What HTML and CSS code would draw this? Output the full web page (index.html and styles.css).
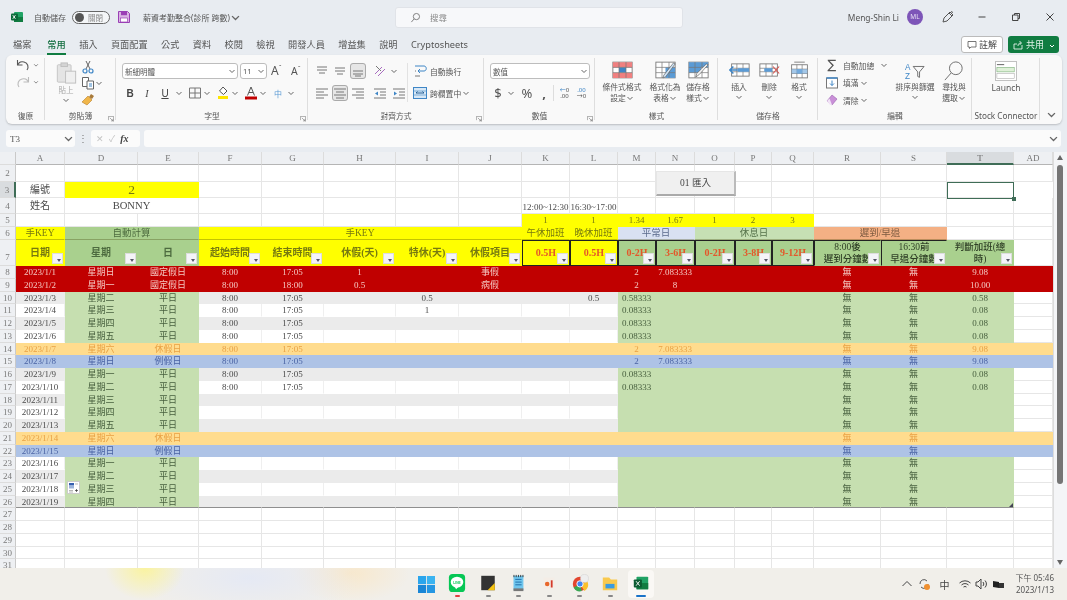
FILE: index.html
```html
<!DOCTYPE html>
<html lang="zh-Hant">
<head>
<meta charset="utf-8">
<title>Excel</title>
<link rel="stylesheet" href="styles.css">
</head>
<body>
<svg class="defs" width="0" height="0"><symbol id="cv" viewBox="0 0 8 8"><path d="M1.5 3L4 5.5 6.5 3" fill="none" stroke="#666" stroke-width="1"/></symbol><symbol id="dl" viewBox="0 0 8 8"><path d="M.5 .5h7v7M.5 .5v5M5.5 .5M2.5 2.5l4 4M6.5 4v2.5H4" fill="none" stroke="#777" stroke-width=".8"/></symbol></svg>
<div class="win">
<header class="title">
  <div class="tl">
    <svg class="xl" viewBox="0 0 12 12"><rect x="3" y="1" width="9" height="10" rx="1" fill="#21a366"/><rect x="3" y="6" width="9" height="5" fill="#107c41"/><rect y="2.5" width="7" height="7" rx="1" fill="#0b6a3a"/><path d="M1.8 4.2l2.6 3.6M4.4 4.2L1.8 7.8" stroke="#fff" stroke-width=".9"/></svg>
    <span class="as">自動儲存</span>
    <span class="tog"><i></i><em>關閉</em></span>
    <svg class="save" viewBox="0 0 12 12"><path d="M.5 .5h9l2 2v9H.5z" fill="#d9b3e3" stroke="#9a3fb5"/><rect x="3" y=".7" width="6" height="3.5" fill="#9a3fb5"/><rect x="2.5" y="7" width="7" height="4" fill="#fff" stroke="#9a3fb5" stroke-width=".7"/></svg>
    <span class="fn">薪資考勤整合(診所 跨數)</span>
    <svg class="cv big"><use href="#cv"/></svg>
  </div>
  <div class="search">
    <svg viewBox="0 0 12 12"><circle cx="7" cy="5" r="3.4" fill="none" stroke="#777"/><path d="M4.5 7.5L1.5 11" stroke="#777"/></svg>
    <span>搜尋</span>
  </div>
  <div class="tr">
    <span class="user">Meng-Shin Li</span>
    <span class="av">ML</span>
    <svg class="pen" viewBox="0 0 14 14"><path d="M2 12l1-4 6-6 3 3-6 6zM8 3l3 3M10 1.500l2 1" fill="none" stroke="#555"/></svg>
    <svg class="wb" viewBox="0 0 10 10"><path d="M1.500 5h7" stroke="#444"/></svg>
    <svg class="wb" viewBox="0 0 10 10"><path d="M1.500 3h5.500v5.500h-5.500zM3.500 3V1.500h5v5H7" fill="none" stroke="#444"/></svg>
    <svg class="wb" viewBox="0 0 10 10"><path d="M1.500 1.500l7 7M8.500 1.500l-7 7" stroke="#444"/></svg>
  </div>
</header>
<nav class="tabs">
  <span>檔案</span><span class="on">常用</span><span>插入</span><span>頁面配置</span><span>公式</span><span>資料</span><span>校閱</span><span>檢視</span><span>開發人員</span><span>增益集</span><span>說明</span><span>Cryptosheets</span>
  <div class="acts">
    <span class="cmt"><svg viewBox="0 0 10 10"><path d="M1 1.500h8v5.500H4L2.500 8.500V7H1z" fill="none" stroke="#555" stroke-width=".8"/></svg>註解</span>
    <span class="share"><svg viewBox="0 0 10 10"><path d="M1 4h3M1 4v5h8V5M5 6c0-2 1-3 3-3M6.500 1L8.500 3 6.500 5" fill="none" stroke="#fff" stroke-width=".8"/></svg>共用<svg class="cv w"><path d="M2 4l2 2 2-2" fill="none" stroke="#fff"/></svg></span>
  </div>
</nav>

<section class="ribbon">
  <div class="g g-undo">
    <div class="b col">
      <div class="row"><svg class="i16" viewBox="0 0 16 16"><path d="M12 13c2-3 1-7-3-8-2-.5-4 0-5 1L2.500 8M2.500 3v5h5" fill="none" stroke="#555" stroke-width="1.100"/></svg><svg class="cv"><use href="#cv"/></svg></div>
      <div class="row"><svg class="i16" viewBox="0 0 16 16"><path d="M4 13c-2-3-1-7 3-8 2-.5 4 0 5 1l1.500 2M13.500 3v5h-5" fill="none" stroke="#bbb" stroke-width="1.100"/></svg><svg class="cv"><use href="#cv"/></svg></div>
    </div>
    <div class="lb">復原</div>
  </div>
  <div class="g g-clip">
    <div class="b clip">
      <div class="paste">
        <svg viewBox="0 0 22 24"><rect x="1" y="3" width="15" height="19" rx="1" fill="#e4e4e4" stroke="#c4c4c4"/><rect x="5" y="1" width="7" height="4" fill="#d4d4d4" stroke="#bdbdbd"/><rect x="10" y="10" width="11" height="13" fill="#efefef" stroke="#bdbdbd"/></svg>
        <span>貼上</span>
        <svg class="cv"><use href="#cv"/></svg>
      </div>
      <div class="clipr">
        <svg class="i14" viewBox="0 0 14 14"><path d="M5 1l4 8M9 1L5 9" stroke="#666" fill="none"/><circle cx="4" cy="11" r="2" fill="none" stroke="#3f86c6" stroke-width="1.200"/><circle cx="10" cy="11" r="2" fill="none" stroke="#3f86c6" stroke-width="1.200"/></svg>
        <div class="row"><svg class="i14" viewBox="0 0 14 14"><path d="M1.500 1.500h6v9h-6z" fill="#fff" stroke="#666"/><path d="M6 5h6.500v8H6z" fill="#fff" stroke="#666"/><path d="M8 8h3M8 10h3" stroke="#3f86c6"/></svg><svg class="cv"><use href="#cv"/></svg></div>
        <svg class="i14" viewBox="0 0 14 14"><path d="M8 5l2-3 3 2-2 3z" fill="#a87a3a"/><path d="M1 10l6-6 4 4-5 5z" fill="#f0b64a" stroke="#b8802a" stroke-width=".6"/></svg>
      </div>
    </div>
    <div class="lb">剪貼簿<svg class="dl"><use href="#dl"/></svg></div>
  </div>
  <div class="g g-font">
    <div class="b col stack">
      <div class="row">
        <span class="sel w116">新細明體<svg class="cv"><use href="#cv"/></svg></span>
        <span class="sel w27 ml2">11<svg class="cv"><use href="#cv"/></svg></span>
        <span class="aa a1">A<sup>ˆ</sup></span><span class="aa a2">A<sup>ˇ</sup></span>
      </div>
      <div class="row r2">
        <span class="ib w16 bold">B</span><span class="ib w18 ital">I</span><span class="ib w18 und">U</span><svg class="cv"><use href="#cv"/></svg>
        <svg class="i14 m4" viewBox="0 0 14 14"><path d="M1.500 2h11v10h-11zM7 2v10M1.500 7h11" fill="none" stroke="#777"/></svg><svg class="cv"><use href="#cv"/></svg>
        <svg class="i14 m4" viewBox="0 0 14 14"><path d="M7 1l4 4-3.500 3.500L3.500 5z" fill="#fff" stroke="#555"/><rect x="2" y="10" width="10" height="3" fill="#ffe600"/></svg><svg class="cv"><use href="#cv"/></svg>
        <svg class="i14 m4" viewBox="0 0 14 14"><path d="M3.500 9.500L7 1l3.500 8.500M5 6.500h4" fill="none" stroke="#555"/><rect x="1" y="10.500" width="12" height="3" fill="#c00000"/></svg><svg class="cv"><use href="#cv"/></svg>
        <span class="ib w16 phon m3">中</span><svg class="cv"><use href="#cv"/></svg>
      </div>
    </div>
    <div class="lb">字型<svg class="dl"><use href="#dl"/></svg></div>
  </div>
  <div class="g g-align">
    <div class="b alignb">
      <div class="col stack lcol">
        <div class="row">
          <svg class="ib16" viewBox="0 0 16 16"><path d="M3 4h10M3 7h10M5 10h6" stroke="#777"/></svg>
          <svg class="ib16" viewBox="0 0 16 16"><path d="M3 6h10M3 9h10M5 12h6" stroke="#777" transform="translate(0 -1)"/></svg>
          <svg class="ib16 act" viewBox="0 0 16 16"><path d="M3 8h10M3 11h10M5 13h6" stroke="#777"/></svg>
          <svg class="ib16 m2" viewBox="0 0 16 16"><path d="M3 11l7-7M6 13l7-7" stroke="#a86cc0"/><path d="M4 3l5 5" stroke="#777"/></svg><svg class="cv"><use href="#cv"/></svg>
        </div>
        <div class="row r2">
          <svg class="ib16" viewBox="0 0 16 16"><path d="M2 4h12M2 7h8M2 10h12M2 13h8" stroke="#777"/></svg>
          <svg class="ib16 act" viewBox="0 0 16 16"><path d="M2 4h12M4 7h8M2 10h12M4 13h8" stroke="#777"/></svg>
          <svg class="ib16" viewBox="0 0 16 16"><path d="M2 4h12M6 7h8M2 10h12M6 13h8" stroke="#777"/></svg>
          <svg class="ib16 m2" viewBox="0 0 16 16"><path d="M2 4h12M8 7h6M8 10h6M2 13h12" stroke="#777"/><path d="M6 6.500L3 8.500l3 2z" fill="#3f86c6"/></svg>
          <svg class="ib16 m1" viewBox="0 0 16 16"><path d="M2 4h12M8 7h6M8 10h6M2 13h12" stroke="#777"/><path d="M3 6.500l3 2-3 2z" fill="#3f86c6"/></svg>
        </div>
      </div>
      <div class="col stack rcol">
        <div class="row"><svg class="ib16" viewBox="0 0 16 16"><path d="M3 3h9c3 0 3 5 0 5H6l2-2M6 8l2 2" fill="none" stroke="#3f86c6"/><path d="M3 8h1M3 13h5" stroke="#777"/></svg><span class="tx">自動換行</span></div>
        <div class="row r2"><svg class="ib16 mg" viewBox="0 0 16 16"><rect x="1.500" y="2.500" width="13" height="11" fill="#d8e8f6" stroke="#3f86c6"/><path d="M1.500 6h13M1.500 10h13" stroke="#3f86c6" stroke-width=".6"/><path d="M4 8h8M4 8l1.500-1.500M12 8l-1.500-1.500" stroke="#235f96" fill="none"/></svg><span class="tx">跨欄置中</span><svg class="cv mgv"><use href="#cv"/></svg></div>
      </div>
    </div>
    <div class="lb">對齊方式<svg class="dl"><use href="#dl"/></svg></div>
  </div>
  <div class="g g-num">
    <div class="b col stack">
      <div class="row"><span class="sel w100">數值<svg class="cv"><use href="#cv"/></svg></span></div>
      <div class="row r2 numr">
        <span class="ib w16 big">$</span><svg class="cv"><use href="#cv"/></svg>
        <span class="ib w18 big pc">%</span><span class="ib w16 big cm">,</span>
        <span class="sepv"></span>
        <span class="dec"><i>←</i>0<br>.00</span><span class="dec"><i>.00</i><br>→0</span>
      </div>
    </div>
    <div class="lb">數值<svg class="dl"><use href="#dl"/></svg></div>
  </div>
  <div class="g g-style">
    <div class="b bigs">
      <div class="bb w54"><svg viewBox="0 0 24 20"><rect x="1" y="1" width="22" height="18" fill="#fff" stroke="#777"/><path d="M1 1h22v6H1z M1 13h22v6H1z" fill="#f08080"/><rect x="8" y="7" width="8" height="6" fill="#3f86c6"/><path d="M1 7h22M1 13h22M8 1v18M16 1v18" stroke="#777" stroke-width=".8"/></svg><span>條件式格式<br>設定<svg class="cv"><use href="#cv"/></svg></span></div>
      <div class="bb w32"><svg viewBox="0 0 24 20"><rect x="1" y="1" width="22" height="18" fill="#fff" stroke="#777"/><path d="M12 7h11v12H12z" fill="#5b9bd5"/><path d="M1 7h22M1 13h22M8 1v18M16 1v18" stroke="#777" stroke-width=".8"/><path d="M23 3L12 18l-3 1 1-3L21 2z" fill="#cfe3f5" stroke="#555" stroke-width=".7"/></svg><span>格式化為<br>表格<svg class="cv"><use href="#cv"/></svg></span></div>
      <div class="bb w34"><svg viewBox="0 0 24 20"><rect x="1" y="1" width="22" height="18" fill="#fff" stroke="#777"/><path d="M1 1h22v6H1zM1 7h14v6H1z" fill="#5b9bd5"/><path d="M1 7h22M1 13h22M8 1v18M16 1v18" stroke="#777" stroke-width=".8"/><path d="M23 4L13 15l-4 3 1-4L21 3z" fill="#f3f3f3" stroke="#555" stroke-width=".7"/></svg><span>儲存格<br>樣式<svg class="cv"><use href="#cv"/></svg></span></div>
    </div>
    <div class="lb">樣式</div>
  </div>
  <div class="g g-cell">
    <div class="b bigs cells">
      <div class="bb w30"><svg viewBox="0 0 24 20"><rect x="3" y="3" width="20" height="14" fill="#fff" stroke="#777"/><path d="M3 8h20M3 12h20M9 3v14M16 3v14" stroke="#777" stroke-width=".8"/><rect x="10" y="8" width="13" height="4" fill="#5b9bd5"/><path d="M10 10H1M5 6l-4 4 4 4" fill="none" stroke="#3f86c6" stroke-width="1.800"/></svg><span>插入</span><svg class="cv"><use href="#cv"/></svg></div>
      <div class="bb w30"><svg viewBox="0 0 24 20"><rect x="1" y="3" width="20" height="14" fill="#fff" stroke="#777"/><path d="M1 8h20M1 12h20M8 3v14M15 3v14" stroke="#777" stroke-width=".8"/><rect x="6" y="8" width="9" height="4" fill="#5b9bd5"/><path d="M16 6l7 8M23 6l-7 8" stroke="#d9534f" stroke-width="1.300"/></svg><span>刪除</span><svg class="cv"><use href="#cv"/></svg></div>
      <div class="bb w30"><svg viewBox="0 0 24 20"><rect x="3" y="4" width="18" height="15" fill="#fff" stroke="#777"/><path d="M3 9h18M3 14h18M9 4v15M15 4v15" stroke="#777" stroke-width=".8"/><rect x="9" y="9" width="6" height="5" fill="#5b9bd5"/><rect x="3" y="9" width="18" height="5" fill="#7db1e0" opacity=".7"/><path d="M6 1h12" stroke="#777"/></svg><span>格式</span><svg class="cv"><use href="#cv"/></svg></div>
    </div>
    <div class="lb">儲存格</div>
  </div>
  <div class="g g-edit">
    <div class="b editb">
      <div class="col stack3">
        <div class="row"><span class="sum">∑</span><span class="tx">自動加總</span><svg class="cv sv"><use href="#cv"/></svg></div>
        <div class="row"><svg class="i12" viewBox="0 0 12 12"><rect x=".5" y="1" width="11" height="10" fill="#fff" stroke="#777"/><path d="M6 3.500v5M4 6.500l2 2 2-2" fill="none" stroke="#3f86c6"/><path d="M.5 1h11" stroke="#3f86c6" stroke-width="1.500"/></svg><span class="tx">填滿</span><svg class="cv"><use href="#cv"/></svg></div>
        <div class="row"><svg class="i12" viewBox="0 0 12 12"><path d="M1 7l5-6 5 4-5 6z" fill="#c990d8" stroke="#9a60b0" stroke-width=".6"/><path d="M1 7l3 4h2L3.500 4.500z" fill="#f1e3f6"/></svg><span class="tx">清除</span><svg class="cv"><use href="#cv"/></svg></div>
      </div>
      <div class="bb w40 sort"><svg viewBox="0 0 24 22"><text class="az" x="1" y="10">A</text><text class="az" x="1" y="20">Z</text><path d="M10 6h12l-5 6v6l-2-1v-5z" fill="none" stroke="#666"/></svg><span>排序與篩選</span><svg class="cv"><use href="#cv"/></svg></div>
      <div class="bb w36 find"><svg viewBox="0 0 24 22"><circle cx="14" cy="8" r="7" fill="none" stroke="#666" stroke-width="1"/><path d="M9 13l-7 8" stroke="#666"/></svg><span>尋找與<br>選取<svg class="cv"><use href="#cv"/></svg></span></div>
    </div>
    <div class="lb">編輯</div>
  </div>
  <div class="g g-stock">
    <div class="b bigs"><div class="bb stock"><svg viewBox="0 0 24 22"><rect x=".5" y=".5" width="23" height="21" fill="#fff" stroke="#bbb"/><rect x="2" y="7" width="19" height="5" fill="#dff0d8" stroke="#5a9a5a" stroke-width=".5"/><rect x="2" y="14" width="19" height="5" fill="#fff" stroke="#999" stroke-width=".5"/><path d="M2 4h8" stroke="#555"/></svg><span>Launch</span></div></div>
    <div class="lb lat">Stock Connector</div>
  </div>
  <div class="coll"><svg class="cv big"><use href="#cv"/></svg></div>
</section>

<div class="fbar">
  <div class="namebox"><span>T3</span><svg class="cv big"><use href="#cv"/></svg></div>
  <span class="dots">⋮</span>
  <div class="fx"><span class="x">✕</span><span class="x">✓</span><em>fx</em></div>
  <div class="finput"><svg class="cv big"><use href="#cv"/></svg></div>
</div>

<main class="sheet">
  <div class="grid">
    <div class="r hd"><b></b><span>A</span><span>D</span><span>E</span><span>F</span><span>G</span><span>H</span><span>I</span><span>J</span><span>K</span><span>L</span><span>M</span><span>N</span><span>O</span><span>P</span><span>Q</span><span>R</span><span>S</span><span class="cur">T</span><span>AD</span></div>
    <div class="r h17"><b>2</b><span></span><span></span><span></span><span></span><span></span><span></span><span></span><span></span><span></span><span></span><span></span><span></span><span></span><span></span><span></span><span></span><span></span><span></span><span></span></div>
    <div class="r h16"><b class="cur">3</b><span class="t10">編號</span><span class="s2 yl t-big">2</span><span></span><span></span><span></span><span></span><span></span><span></span><span></span><span></span><span></span><span></span><span></span><span></span><span></span><span></span><span></span></div>
    <div class="r h16"><b>4</b><span class="t10">姓名</span><span class="s2 t11">BONNY</span><span></span><span></span><span></span><span></span><span></span><span class="bt">12:00~12:30</span><span class="bt">16:30~17:00</span><span></span><span></span><span></span><span></span><span></span><span></span><span></span><span></span><span></span></div>
    <div class="r h13"><b>5</b><span></span><span></span><span></span><span></span><span></span><span></span><span></span><span></span><span class="yl">1</span><span class="yl">1</span><span class="yl">1.34</span><span class="yl">1.67</span><span class="yl">1</span><span class="yl">2</span><span class="yl">3</span><span></span><span></span><span></span><span></span></div>
    <div class="r h13 lab"><b>6</b><span class="yl">手KEY</span><span class="s2 gd">自動計算</span><span class="s5 yl">手KEY</span><span class="yl">午休加班</span><span class="yl">晚休加班</span><span class="s2 bl">平常日</span><span class="s3 lg">休息日</span><span class="s2 or">遲到/早退</span><span></span><span></span></div>
    <div class="r h26 th"><b>7</b>
      <span class="yl f">日期</span><span class="gd f">星期</span><span class="gd f">日</span><span class="yl f">起始時間</span><span class="yl f">結束時間</span><span class="yl f">休假(天)</span><span class="yl f">特休(天)</span><span class="yl f">休假項目</span>
      <span class="yl f bx hot">0.5H</span><span class="yl f bx hot">0.5H</span><span class="gd f bx hot">0-2H</span><span class="gd f bx hot">3-6H</span><span class="gd f bx hot">0-2H</span><span class="gd f bx hot">3-8H</span><span class="gd f bx hot">9-12H</span>
      <span class="gd f bt2">8:00後<br>遲到分鐘數</span><span class="gd f bt2">16:30前<br>早退分鐘數</span><span class="gd f bt3">判斷加班(總<br>時)</span><span></span></div>

    <div class="r red"><b>8</b><span>2023/1/1</span><span>星期日</span><span>國定假日</span><span>8:00</span><span>17:05</span><span>1</span><span></span><span>事假</span><span></span><span></span><span>2</span><span>7.083333</span><span></span><span></span><span></span><span>無</span><span>無</span><span>9.08</span><span></span></div>
    <div class="r red"><b>9</b><span>2023/1/2</span><span>星期一</span><span>國定假日</span><span>8:00</span><span>18:00</span><span>0.5</span><span></span><span>病假</span><span></span><span></span><span>2</span><span>8</span><span></span><span></span><span></span><span>無</span><span>無</span><span>10.00</span><span></span></div>
    <div class="r even"><b>10</b><span>2023/1/3</span><span>星期二</span><span>平日</span><span>8:00</span><span>17:05</span><span></span><span>0.5</span><span></span><span></span><span>0.5</span><span class="l">0.58333</span><span></span><span></span><span></span><span></span><span>無</span><span>無</span><span>0.58</span><span></span></div>
    <div class="r odd"><b>11</b><span>2023/1/4</span><span>星期三</span><span>平日</span><span>8:00</span><span>17:05</span><span></span><span>1</span><span></span><span></span><span></span><span class="l">0.08333</span><span></span><span></span><span></span><span></span><span>無</span><span>無</span><span>0.08</span><span></span></div>
    <div class="r even"><b>12</b><span>2023/1/5</span><span>星期四</span><span>平日</span><span>8:00</span><span>17:05</span><span></span><span></span><span></span><span></span><span></span><span class="l">0.08333</span><span></span><span></span><span></span><span></span><span>無</span><span>無</span><span>0.08</span><span></span></div>
    <div class="r odd"><b>13</b><span>2023/1/6</span><span>星期五</span><span>平日</span><span>8:00</span><span>17:05</span><span></span><span></span><span></span><span></span><span></span><span class="l">0.08333</span><span></span><span></span><span></span><span></span><span>無</span><span>無</span><span>0.08</span><span></span></div>
    <div class="r sat"><b>14</b><span>2023/1/7</span><span>星期六</span><span>休假日</span><span>8:00</span><span>17:05</span><span></span><span></span><span></span><span></span><span></span><span>2</span><span>7.083333</span><span></span><span></span><span></span><span>無</span><span>無</span><span>9.08</span><span></span></div>
    <div class="r sun"><b>15</b><span>2023/1/8</span><span>星期日</span><span>例假日</span><span>8:00</span><span>17:05</span><span></span><span></span><span></span><span></span><span></span><span>2</span><span>7.083333</span><span></span><span></span><span></span><span>無</span><span>無</span><span>9.08</span><span></span></div>
    <div class="r even"><b>16</b><span>2023/1/9</span><span>星期一</span><span>平日</span><span>8:00</span><span>17:05</span><span></span><span></span><span></span><span></span><span></span><span class="l">0.08333</span><span></span><span></span><span></span><span></span><span>無</span><span>無</span><span>0.08</span><span></span></div>
    <div class="r odd"><b>17</b><span>2023/1/10</span><span>星期二</span><span>平日</span><span>8:00</span><span>17:05</span><span></span><span></span><span></span><span></span><span></span><span class="l">0.08333</span><span></span><span></span><span></span><span></span><span>無</span><span>無</span><span>0.08</span><span></span></div>
    <div class="r even"><b>18</b><span>2023/1/11</span><span>星期三</span><span>平日</span><span></span><span></span><span></span><span></span><span></span><span></span><span></span><span></span><span></span><span></span><span></span><span></span><span>無</span><span>無</span><span></span><span></span></div>
    <div class="r odd"><b>19</b><span>2023/1/12</span><span>星期四</span><span>平日</span><span></span><span></span><span></span><span></span><span></span><span></span><span></span><span></span><span></span><span></span><span></span><span></span><span>無</span><span>無</span><span></span><span></span></div>
    <div class="r even"><b>20</b><span>2023/1/13</span><span>星期五</span><span>平日</span><span></span><span></span><span></span><span></span><span></span><span></span><span></span><span></span><span></span><span></span><span></span><span></span><span>無</span><span>無</span><span></span><span></span></div>
    <div class="r sat"><b>21</b><span>2023/1/14</span><span>星期六</span><span>休假日</span><span></span><span></span><span></span><span></span><span></span><span></span><span></span><span></span><span></span><span></span><span></span><span></span><span>無</span><span>無</span><span></span><span></span></div>
    <div class="r sun"><b>22</b><span>2023/1/15</span><span>星期日</span><span>例假日</span><span></span><span></span><span></span><span></span><span></span><span></span><span></span><span></span><span></span><span></span><span></span><span></span><span>無</span><span>無</span><span></span><span></span></div>
    <div class="r odd"><b>23</b><span>2023/1/16</span><span>星期一</span><span>平日</span><span></span><span></span><span></span><span></span><span></span><span></span><span></span><span></span><span></span><span></span><span></span><span></span><span>無</span><span>無</span><span></span><span></span></div>
    <div class="r even"><b>24</b><span>2023/1/17</span><span>星期二</span><span>平日</span><span></span><span></span><span></span><span></span><span></span><span></span><span></span><span></span><span></span><span></span><span></span><span></span><span>無</span><span>無</span><span></span><span></span></div>
    <div class="r odd"><b>25</b><span>2023/1/18</span><span>星期三</span><span>平日</span><span></span><span></span><span></span><span></span><span></span><span></span><span></span><span></span><span></span><span></span><span></span><span></span><span>無</span><span>無</span><span></span><span></span></div>
    <div class="r even last"><b>26</b><span>2023/1/19</span><span>星期四</span><span>平日</span><span></span><span></span><span></span><span></span><span></span><span></span><span></span><span></span><span></span><span></span><span></span><span></span><span>無</span><span>無</span><span></span><span></span></div>
    <div class="r"><b>27</b><span></span><span></span><span></span><span></span><span></span><span></span><span></span><span></span><span></span><span></span><span></span><span></span><span></span><span></span><span></span><span></span><span></span><span></span><span></span></div>
    <div class="r"><b>28</b><span></span><span></span><span></span><span></span><span></span><span></span><span></span><span></span><span></span><span></span><span></span><span></span><span></span><span></span><span></span><span></span><span></span><span></span><span></span></div>
    <div class="r"><b>29</b><span></span><span></span><span></span><span></span><span></span><span></span><span></span><span></span><span></span><span></span><span></span><span></span><span></span><span></span><span></span><span></span><span></span><span></span><span></span></div>
    <div class="r"><b>30</b><span></span><span></span><span></span><span></span><span></span><span></span><span></span><span></span><span></span><span></span><span></span><span></span><span></span><span></span><span></span><span></span><span></span><span></span><span></span></div>
    <div class="r"><b>31</b><span></span><span></span><span></span><span></span><span></span><span></span><span></span><span></span><span></span><span></span><span></span><span></span><span></span><span></span><span></span><span></span><span></span><span></span><span></span></div>
  </div>
  <div class="vs"><i class="up"></i><i class="thumb"></i><i class="down"></i></div>
  <div class="btn01">01 匯入</div>
  <div class="selbox"></div>
  <svg class="afill" viewBox="0 0 13 13"><rect x=".5" y=".5" width="12" height="12" fill="#fff" stroke="#ccc"/><rect x="2" y="2" width="5" height="2.500" fill="#3560b0"/><rect x="2" y="5" width="5" height="2.500" fill="#9db4dc"/><path d="M8 3h3M2 9.500h4M2 11h4" stroke="#999" stroke-width=".7"/><path d="M8 9.500h3M9.500 8v3" stroke="#333" stroke-width=".7"/></svg>
  <i class="handle"></i>
</main>

<footer class="taskbar">
  <div class="apps">
    <svg class="win11" viewBox="0 0 20 20"><rect width="9.500" height="9.500" fill="#2aa5ec"/><rect x="10.500" width="9.500" height="9.500" fill="#3ab3f0"/><rect y="10.500" width="9.500" height="9.500" fill="#1a86d6"/><rect x="10.500" y="10.500" width="9.500" height="9.500" fill="#2596e2"/></svg>
    <div class="app dotr"><svg viewBox="0 0 20 20"><rect width="18" height="20" x="1" rx="4" fill="#06c755"/><ellipse cx="10" cy="9" rx="7" ry="6" fill="#fff"/><path d="M7 13l2 4 3-3z" fill="#fff"/><text class="lt" x="10" y="11" text-anchor="middle">LINE</text></svg></div>
    <div class="app dot"><svg viewBox="0 0 20 20"><rect x="2.500" y="2" width="15" height="16" fill="#333"/><path d="M17.500 10v8h-8z" fill="#f6c413"/></svg></div>
    <div class="app dot"><svg viewBox="0 0 20 20"><rect x="5" y="2" width="11" height="16" fill="#6fc6ee"/><path d="M7 6h7M7 9h7M7 12h7" stroke="#1b6aa5"/><path d="M5.500 1v2.500M8 1v2.500M10.500 1v2.500M13 1v2.500M15.500 1v2.500" stroke="#333"/><rect x="5" y="16" width="11" height="3" fill="#777"/></svg></div>
    <div class="app dot"><svg viewBox="0 0 20 20"><rect x="4" y="4" width="12" height="13" fill="#f4ede6"/><circle cx="8" cy="11" r="2.500" fill="#e8672b"/><rect x="12" y="7" width="2" height="8" fill="#d43a2a"/></svg></div>
    <div class="app dot"><svg viewBox="0 0 20 20"><circle cx="10" cy="11" r="8" fill="#e2452f"/><path d="M10 11L3 15a8 8 0 0 0 9 4z" fill="#39a854"/><path d="M10 11l5 8a8 8 0 0 0 3-11z" fill="#fbc02d"/><circle cx="10" cy="11" r="3.500" fill="#4285f4" stroke="#fff"/><circle cx="15" cy="5" r="4.500" fill="#eee" stroke="#ccc" stroke-width=".5"/></svg></div>
    <div class="app dot"><svg viewBox="0 0 20 20"><path d="M2 4h7l2 2h7v12H2z" fill="#f9c94d"/><rect x="5" y="11" width="10" height="5" fill="#3a9be0"/></svg></div>
    <div class="app cur"><svg viewBox="0 0 20 20"><rect x="5" y="3" width="13" height="14" rx="1" fill="#21a366"/><rect x="5" y="10" width="13" height="7" fill="#107c41"/><rect x="2" y="6" width="9" height="9" rx="1" fill="#0b5c32"/><path d="M4.500 8l4 5M8.500 8l-4 5" stroke="#fff"/></svg></div>
  </div>
  <div class="tray">
    <svg class="ti" viewBox="0 0 14 14"><path d="M2.500 9L7 4.500 11.500 9" fill="none" stroke="#444"/></svg>
    <svg class="ti" viewBox="0 0 14 14"><path d="M3 7a4 4 0 0 1 7-3M11 7a4 4 0 0 1-7 3" fill="none" stroke="#555"/><circle cx="10" cy="10" r="3" fill="#f09030"/></svg>
    <span class="ime">中</span>
    <svg class="ti m" viewBox="0 0 14 14"><path d="M1.500 6a8 8 0 0 1 11 0M3.500 8a5 5 0 0 1 7 0M5.500 10a2.500 2.500 0 0 1 3 0" fill="none" stroke="#444"/></svg>
    <svg class="ti s" viewBox="0 0 14 14"><path d="M2 5h2l3-3v10L4 9H2z" fill="none" stroke="#444"/><path d="M9 5a3 3 0 0 1 0 4M11 3.500a5 5 0 0 1 0 7" fill="none" stroke="#444"/></svg>
    <svg class="ti s" viewBox="0 0 14 14"><path d="M2 4l6 1v6l-6-1z" fill="#222"/><rect x="8" y="6" width="5" height="5" fill="#333"/></svg>
    <div class="clock"><span>下午 05:46</span><span>2023/1/13</span></div>
  </div>
</footer>
</div>
</body>
</html>
```

FILE: styles.css
```css
* { box-sizing: border-box; }
html, body { margin: 0; height: 100%; overflow: hidden; }
body { font-family: "Noto Sans", "Noto Sans CJK TC", sans-serif; color: #555; font-size: 8px; }
.defs { position: absolute; }
.win { width: 1067px; height: 600px; background: #e8ecf1; display: flex; flex-direction: column; overflow: hidden; filter: blur(.35px); }
svg { display: block; flex: none; }
.cv { width: 8px; height: 8px; }
.cv.big { width: 11px; height: 11px; }
.row { display: flex; align-items: center; }

/* title bar */
.title { height: 34px; flex: none; display: grid; grid-template-columns: 395px 288px 1fr; align-items: center; }
.tl { display: flex; align-items: center; padding-left: 11px; }
.xl { width: 12px; height: 12px; }
.as { margin-left: 11px; width: 33px; white-space: nowrap; }
.tog { margin-left: 5px; width: 38px; height: 13px; border: 1px solid #666; border-radius: 7px; display: flex; align-items: center; padding-left: 2px; background: #f4f6f8; }
.tog i { width: 9px; height: 9px; border-radius: 50%; background: #555; }
.tog em { font-style: normal; font-size: 7.5px; margin-left: 4px; color: #888; }
.save { margin-left: 8px; width: 12px; height: 12px; }
.fn { margin-left: 13px; font-size: 8px; white-space: nowrap; }
.search { height: 21px; background: #f7f8fa; border-radius: 3px; border: 1px solid #e0e3e8; display: flex; align-items: center; padding-left: 14px; color: #8a8a8a; font-size: 8.500px; }
.search svg { width: 11px; height: 11px; margin-right: 9px; }
.tr { display: flex; align-items: center; justify-content: flex-end; padding-right: 12px; }
.user { font-size: 8.400px; margin-right: 8px; }
.av { width: 16px; height: 16px; border-radius: 50%; background: #7d55b8; color: #e8dff5; font-size: 6.500px; line-height: 16px; text-align: center; margin-right: 18px; }
.pen { width: 14px; height: 14px; margin-right: 22px; }
.wb { width: 10px; height: 10px; margin-right: 24px; }
.wb:last-child { margin-right: 0; }

/* tabs */
.tabs { height: 21px; flex: none; display: flex; align-items: center; gap: 13.400px; padding: 0 8px 0 13px; font-size: 9.200px; color: #555; white-space: nowrap; }
.tabs > span { position: relative; line-height: 18px; }
.on { color: #0f6b3c; font-weight: 500; margin-left: 2.600px; }
.on::after { content: ""; position: absolute; left: 0; right: 0; bottom: -1px; height: 2px; background: #107c41; }
.acts { margin-left: auto; display: flex; gap: 5px; }
.cmt, .share { height: 17px; display: flex; align-items: center; border-radius: 3px; font-size: 9px; }
.cmt { width: 42px; background: #fff; border: 1px solid #bbb; padding-left: 5px; color: #444; }
.cmt svg, .share svg:first-child { width: 10px; height: 10px; margin-right: 2px; }
.share { width: 51px; background: #107c41; color: #e4f3ea; padding-left: 5px; gap: 1px; }
.share .cv { margin-left: 3px; }

/* ribbon */
.ribbon { height: 69px; flex: none; margin: 0 5px 0 6px; background: #f9f9f9; border-radius: 6px; box-shadow: 0 1px 2px rgba(0,0,0,.2); display: flex; }
.g { display: flex; flex-direction: column; padding-top: 8px; position: relative; flex: none; }
.g::after { content: ""; position: absolute; right: 0; top: 3px; bottom: 4px; width: 1px; background: #dedede; }
.g-undo { width: 39px; } .g-clip { width: 71px; } .g-font { width: 192px; } .g-align { width: 176px; }
.g-num { width: 111px; } .g-style { width: 123px; } .g-cell { width: 100px; } .g-edit { width: 154px; } .g-stock { width: 68px; }
.b { height: 47px; flex: none; }
.lb { position: relative; flex: 1; text-align: center; font-size: 7.800px; line-height: 12px; color: #555; white-space: nowrap; }
.lat { font-size: 8.200px; }
.dl { position: absolute; right: 2px; bottom: 2px; width: 6px; height: 6px; }
.col { display: flex; flex-direction: column; }
.i16 { width: 16px; height: 16px; } .i14 { width: 14px; height: 14px; } .i12 { width: 12px; height: 12px; }
.g-undo .col { padding: 0 0 0 9px; gap: 1px; margin-top: -6px; height: 53px; }
.g-undo .cv { margin-left: 2px; width: 6px; height: 6px; }
.clip { display: flex; padding-left: 9px; }
.paste { width: 24px; display: flex; flex-direction: column; align-items: center; color: #aaa; margin-top: -1px; }
.paste svg:first-child { width: 21px; height: 22px; }
.paste span { font-size: 7.500px; line-height: 11px; margin-top: 1px; }
.clipr { margin-left: 3px; display: flex; flex-direction: column; gap: 2px; margin-top: -3px; }
.stack { padding-left: 6px; gap: 6px; }
.stack .row { height: 16px; }
.sel { height: 16px; border: 1px solid #bdbdbd; border-radius: 3px; background: #fff; display: flex; align-items: center; justify-content: space-between; padding: 0 1px 0 2px; font-size: 7.500px; color: #555; }
.w116 { width: 116px; } .w27 { width: 27px; } .w100 { width: 100px; } .ml2 { margin-left: 2px; }
.aa { font-size: 12px; color: #555; line-height: 16px; position: relative; white-space: nowrap; }
.aa sup { font-size: 7px; line-height: 0; }
.a1 { margin-left: 4px; width: 19px; } .a2 { margin-left: 1px; font-size: 10.500px; }
.ib { display: flex; align-items: center; justify-content: center; height: 16px; font-size: 10px; color: #444; }
.w16 { width: 16px; } .w18 { width: 18px; }
.bold { font-weight: 700; font-family: "Liberation Sans", sans-serif; }
.ital { font-style: italic; font-family: "Liberation Serif", serif; }
.und { text-decoration: underline; font-family: "Liberation Sans", sans-serif; }
.phon { color: #5b9bd5; font-size: 8px; }
.r2 .cv { margin-left: 1px; }
.m4 { margin-left: 5px; } .m3 { margin-left: 3px; } .m2 { margin-left: 4px; } .m1 { margin-left: 1px; }
.alignb { display: flex; }
.ib16 { width: 16px; height: 16px; margin-right: 2px; border-radius: 3px; }
.act { background: #e6e6e6; outline: 1px solid #aaa; outline-offset: -1px; }
.lcol { padding-left: 6px; width: 100px; border-right: 1px solid #e2e2e2; margin-bottom: 8px; }
.rcol { padding-left: 4px; }
.tx { font-size: 7.800px; white-space: nowrap; color: #555; }
.mg { margin-right: 2px; }
.mgv { margin-left: 7px; }
.numr { padding-left: 0; }
.big { font-size: 13px; color: #555; }
.pc { margin-left: 3px; } .cm { font-weight: 700; margin-left: 0; }
.sepv { width: 1px; height: 16px; background: #ddd; margin: 0 2px 0 1px; }
.dec { width: 17px; font-size: 6px; line-height: 6.500px; color: #555; text-align: center; }
.dec i { font-style: normal; color: #3f86c6; }
.bigs { display: flex; }
.cells { padding-left: 6px; }
.bb { display: flex; flex-direction: column; align-items: center; flex: none; font-size: 7.800px; line-height: 11px; color: #555; text-align: center; white-space: nowrap; margin-top: -2px; }
.bb > svg:first-child { width: 21px; height: 18px; margin-bottom: 3px; }
.bb span .cv { display: inline-block; vertical-align: -1px; }
.w54 { width: 54px; } .w32 { width: 32px; } .w34 { width: 34px; } .w30 { width: 30px; } .w40 { width: 42px; } .w36 { width: 36px; }
.editb { display: flex; padding-left: 8px; }
.stack3 { width: 69px; gap: 1.500px; margin-top: -6px; }
.stack3 .row { height: 16px; }
.stack3 .tx { margin-left: 5px; }
.stack3 .cv { margin-left: 1px; }
.sum { width: 12px; font-size: 13px; line-height: 14px; text-align: center; color: #555; font-family: "DejaVu Sans", sans-serif; }
.sv { margin-left: 6px !important; }
.az { font: 9px "Liberation Sans", sans-serif; fill: #3f86c6; }
.sort > svg:first-child, .find > svg:first-child { height: 20px; width: 22px; margin-bottom: 1px; }
.stock { width: 100%; }
.stock > svg:first-child { height: 20px; width: 22px; margin-bottom: 1px; }
.stock span { font-size: 8.500px; line-height: 12px; font-family: "Noto Sans", sans-serif; }
.coll { flex: 1; display: flex; align-items: flex-end; justify-content: center; padding-bottom: 4px; }

/* formula bar */
.fbar { height: 17px; flex: none; margin: 6px 6px 5px; display: flex; align-items: stretch; }
.namebox { width: 69px; background: #fbfbfb; border-radius: 3px; display: flex; align-items: center; justify-content: space-between; padding: 0 1px 0 4px; font: 9px "Liberation Serif", serif; color: #555; }
.dots { width: 16px; text-align: center; font-size: 10px; line-height: 17px; color: #777; }
.fx { width: 49px; background: #fbfbfb; border-radius: 3px; display: flex; align-items: center; gap: 5px; padding-left: 5px; color: #c4c4c4; font-size: 9px; }
.fx em { font: italic 700 10px "Liberation Serif", serif; color: #444; }
.finput { flex: 1; margin-left: 4px; background: #fbfbfb; border-radius: 3px; display: flex; align-items: center; justify-content: flex-end; padding-right: 2px; }

/* sheet */
.sheet { height: 416px; flex: none; background: #fff; display: flex; position: relative; overflow: hidden; }
.grid { width: 1053px; flex: none; font: 9px/12.750px "Liberation Serif", "Noto Sans CJK TC", serif; color: #4a4a4a; }
.r { display: grid; grid-template-columns: 16px 49px 73px 61px 63px 62px 72px 63px 63px 48px 48px 38px 39px 40px 37px 42px 67px 66px 67px 39px; grid-template-rows: minmax(0, 1fr); height: 12.750px; }
.r > * { font-style: normal; font-weight: 400; text-align: center; white-space: nowrap; border-right: 1px solid #e6e6e6; border-bottom: 1px solid #e6e6e6; min-width: 0; min-height: 0; }
.r > b { background: #eef0f3; color: #7a7a7a; border-right: 1px solid #c9c9c9; border-bottom-color: #dcdcdc; }
.r > b.cur { background: #d9dcdf; border-right: 2px solid #3f6d57; }
.hd { height: 13px; color: #777; line-height: 13px; }
.hd > * { background: #eef0f3; border-bottom: 1px solid #b5b5b5; border-right-color: #dcdcdc; }
.hd .cur { background: #d9dcdf; border-bottom: 2px solid #3f6d57; color: #666; }
.h17 { height: 17px; } .h17 > * { line-height: 17px; }
.h16 { height: 16px; } .h16 > * { line-height: 16px; }
.h13 { height: 13px; } .h13 > * { line-height: 13px; }
.h26 { height: 26px; } .h26 > b { line-height: 34px; }
.s2 { grid-column: span 2; } .s3 { grid-column: span 3; } .s5 { grid-column: span 5; }
.t10 { font-size: 10px; } .t11 { font-size: 10.600px; } .t-big { font-size: 13.500px; }
.r .yl { background: #ffff00; color: #777a10; border-color: transparent; }
.r .gd { background: #a9d08e; color: #4d6b3f; border-color: transparent; }
.r .bl { background: #d9e1f2; color: #5a6a8c; border-color: transparent; }
.r .lg { background: #c6e0b4; color: #55724a; border-color: transparent; }
.r .or { background: #f4b084; color: #7b5a40; border-color: transparent; }
.lab > span { font-size: 9.500px; border-bottom-color: rgba(60,60,0,.3) !important; }
.lab > span:nth-last-child(-n+2) { border-bottom-color: #e6e6e6 !important; }
.bt { line-height: 18px !important; }
.th > span { display: flex; align-items: center; justify-content: center; position: relative; font-size: 10px; line-height: 12px; font-weight: 700; color: #2c2c14; padding: 0; }
.r .th-x { border: 0; }
.r .bx { border: 1px solid #222; }
.r .bt2 { border-top: 1px solid #222; border-left: 1px solid #222; font-size: 9.500px; font-weight: 500; color: #2f3f26; }
.r .bt3 { font-size: 9.500px; font-weight: 500; color: #2f3f26; }
.r .hot { color: #e4572a; }
.f::after { content: ""; position: absolute; right: 1px; bottom: 1px; width: 9px; height: 9px; background: #f4f4f8; border: 1px solid #ddd; }
.f::before { content: ""; position: absolute; right: 3px; bottom: 3px; z-index: 1; border: 2.500px solid transparent; border-top: 3px solid #556; border-bottom: 0; }

/* data rows */
.red > :not(b) { background: #c00000; color: #f4c6c0; border-color: transparent; }
.sat > :not(b) { background: #ffdc8e; color: #e9a144; border-color: transparent; }
.sun > :not(b) { background: #aec3e6; color: #4a63a4; border-color: transparent; }
.odd > :nth-child(n+2):nth-child(-n+11) { border-bottom-color: transparent; border-right-color: #efefef; }
.even > :nth-child(n+2):nth-child(-n+11) { background: #ebebeb; border-color: transparent; }
.odd > :nth-child(n+3):nth-child(-n+4), .even > :nth-child(n+3):nth-child(-n+4),
.odd > :nth-child(n+12):nth-child(-n+19), .even > :nth-child(n+12):nth-child(-n+19) { background: #c6dfb0; color: #475f3e; border-color: transparent; }
.l { text-align: left !important; padding-left: 4px; }
.last > :nth-child(n+2):nth-child(-n+19) { border-bottom-color: #8f8f8f; }

/* scrollbar and overlays */
.vs { flex: 1; background: #f4f5f7; border-left: 1px solid #dcdcdc; position: relative; }
.thumb { position: absolute; left: 3px; top: 13px; width: 6px; height: 319px; border-radius: 3px; background: #757575; }
.up, .down { position: absolute; left: 3px; border: 3px solid transparent; }
.up { top: 3px; border-bottom: 5px solid #666; border-top: 0; }
.down { bottom: 3px; border-top: 5px solid #666; border-bottom: 0; }
.btn01 { position: absolute; left: 656px; top: 19px; width: 80px; height: 25px; background: #f0f0f0; border-bottom: 2px solid #aaa; border-right: 2px solid #bbb; border-top: 1px solid #e6e6e6; border-left: 1px solid #e6e6e6; font: 9.500px/22px "Liberation Serif", "Noto Sans CJK TC", serif; text-align: center; color: #444; }
.selbox { position: absolute; left: 947px; top: 30px; width: 67px; height: 17px; border: 1.500px solid #3f6d57; }
.selbox::after { content: ""; position: absolute; right: -3px; bottom: -3px; width: 4px; height: 4px; background: #3f6d57; }
.afill { position: absolute; left: 67px; top: 329px; width: 13px; height: 13px; }
.handle { position: absolute; left: 1009px; top: 351px; border: 2.500px solid transparent; border-right-color: #445; border-bottom-color: #445; }

/* taskbar */
.taskbar { flex: 1; display: flex; position: relative; background:
  radial-gradient(ellipse 40px 32px at 145px 0, #faf3a0 0, rgba(250,243,160,0) 100%),
  radial-gradient(ellipse 110px 40px at 250px 10px, #e5e9f4 0, rgba(229,233,244,0) 100%),
  radial-gradient(ellipse 60px 30px at 350px 5px, #f8e8cc 0, rgba(248,232,204,0) 100%),
  #f1efea; }
.apps { position: absolute; left: 415px; top: 0; height: 32px; display: flex; align-items: center; }
.win11 { width: 17px; height: 17px; margin: 0 7px 0 3px; }
.app { width: 30.600px; height: 28px; display: flex; align-items: center; justify-content: center; position: relative; padding-bottom: 3px; }
.app svg { width: 18px; height: 18px; }
.app::after { content: ""; position: absolute; bottom: 1px; left: 13px; width: 5px; height: 2px; border-radius: 1px; }
.dot::after { background: #888; }
.dotr::after { background: #e04040; }
.app.cur { background: #faf8f5; border-radius: 4px; width: 26px; margin-left: 2px; }
.app.cur::after { left: 8px; width: 10px; background: #1a73c8; }
.lt { font: 700 3.600px "Liberation Sans", sans-serif; fill: #06c755; }
.tray { position: absolute; right: 13px; top: 0; height: 32px; display: flex; align-items: center; color: #444; }
.ti { width: 14px; height: 14px; margin-right: 3px; }
.ti.m { margin-left: 9px; margin-right: 2px; }
.ti.s { margin-right: 3px; }
.ime { font-size: 10px; margin-left: 5px; }
.clock { display: flex; flex-direction: column; align-items: flex-end; font-size: 8px; line-height: 12px; margin-left: 7px; color: #555; white-space: nowrap; }
```
